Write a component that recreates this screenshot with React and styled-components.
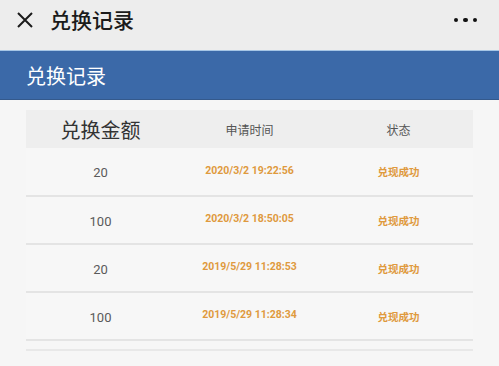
import React from "react";
import styled, { createGlobalStyle } from "styled-components";

const Global = createGlobalStyle`
  html, body {
    margin: 0;
    padding: 0;
    background: #f6f6f6;
    font-family: Roboto, "Noto Sans CJK SC", "Noto Sans", sans-serif;
  }
`;

const Page = styled.div`
  width: 499px;
  height: 366px;
  overflow: hidden;
  background: #f6f6f6;
`;

const TopBar = styled.div`
  height: 50px;
  display: flex;
  align-items: center;
  padding: 0 22px 10px 16px;
  background: #ededed;
  box-sizing: border-box;
`;

const Close = styled.div`
  width: 18px;
  height: 18px;
  display: flex;
`;

const TopTitle = styled.div`
  margin-left: 16px;
  margin-top: -3px;
  font-size: 21px;
  font-weight: 500;
  color: #1b1b1b;
  flex: 1;
`;

const Dots = styled.div`
  display: flex;
  gap: 5px;
`;

const Dot = styled.span`
  width: 4.5px;
  height: 4.5px;
  border-radius: 50%;
  background: #111;
`;

const Banner = styled.div`
  height: 50px;
  display: flex;
  align-items: center;
  padding-left: 26px;
  background: #3b69a8;
  border-top: 1px solid #a6c6e6;
  border-bottom: 1px solid #34598c;
  box-sizing: border-box;
  color: #fff;
  font-size: 20px;
`;

const Table = styled.div`
  margin: 10px 26px 0;
`;

const Row = styled.div`
  display: grid;
  grid-template-columns: 1fr 1fr 1fr;
  align-items: center;
  height: ${(p) => p.$h}px;
  background: ${(p) => (p.$head ? "#eeeeee" : "#f7f7f7")};
  border-bottom: ${(p) => (p.$head ? "none" : "2px solid #e4e4e4")};
  box-sizing: border-box;
`;

const Cell = styled.div`
  text-align: center;
  font-size: ${(p) => p.$size}px;
  font-weight: ${(p) => (p.$bold ? 700 : 400)};
  color: ${(p) => p.$color};
  margin-top: ${(p) => p.$pt || 0}px;
`;

const Tail = styled.div`
  height: 8px;
  border-bottom: 2px solid #e8e8e8;
`;

const records = [
  { amount: "20", time: "2020/3/2 19:22:56", state: "兑现成功" },
  { amount: "100", time: "2020/3/2 18:50:05", state: "兑现成功" },
  { amount: "20", time: "2019/5/29 11:28:53", state: "兑现成功" },
  { amount: "100", time: "2019/5/29 11:28:34", state: "兑现成功" },
];

const orange = "#df9a3e";

export default function App() {
  return (
    <Page>
      <Global />
      <TopBar>
        <Close>
          <svg width="18" height="18" viewBox="0 0 18 18">
            <path d="M2 2 L16 16 M16 2 L2 16" stroke="#1b1b1b" strokeWidth="2" />
          </svg>
        </Close>
        <TopTitle>兑换记录</TopTitle>
        <Dots>
          <Dot />
          <Dot />
          <Dot />
        </Dots>
      </TopBar>
      <Banner>兑换记录</Banner>
      <Table>
        <Row $head $h={38}>
          <Cell $size={20} $color="#333">兑换金额</Cell>
          <Cell $size={12} $color="#555">申请时间</Cell>
          <Cell $size={12} $color="#555">状态</Cell>
        </Row>
        {records.map((r, i) => (
          <Row key={i} $h={i === 0 ? 49 : 48}>
            <Cell $size={13} $color="#5a5a5a" $pt={2}>{r.amount}</Cell>
            <Cell $size={10.5} $bold $color={orange} $pt={-3}>{r.time}</Cell>
            <Cell $size={10.5} $bold $color={orange}>{r.state}</Cell>
          </Row>
        ))}
        <Tail />
      </Table>
    </Page>
  );
}
